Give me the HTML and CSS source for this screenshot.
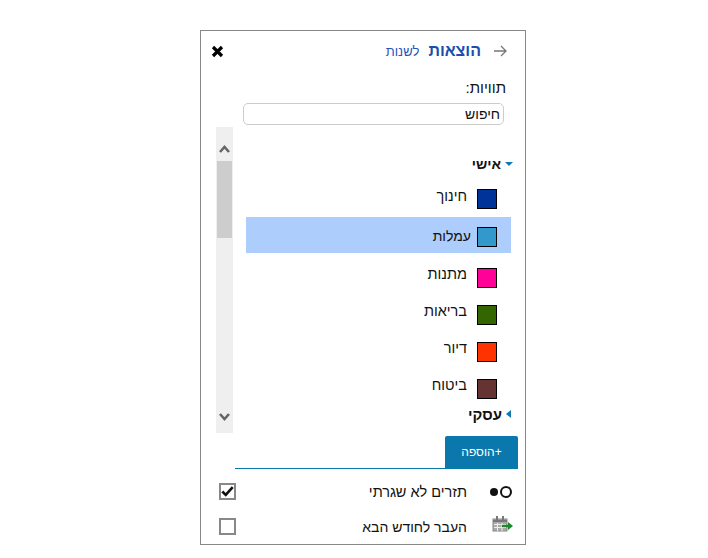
FILE: index.html
```html
<!DOCTYPE html>
<html lang="he" dir="rtl">
<head>
    <meta charset="UTF-8">
    <title>הוצאות</title>
    <link rel="stylesheet" href="styles.css">
</head>
<body>
    <div class="panel">
        <div class="panel__header">
            <svg class="panel__back" width="14" height="12" viewBox="0 0 14 12"><path d="M1 6h12M8 1l5 5-5 5" fill="none" stroke="#777" stroke-width="1.3"/></svg>
            <span class="panel__title">הוצאות</span>
            <a class="panel__change">לשנות</a>
            <svg class="panel__close" width="13" height="13" viewBox="0 0 13 13"><path d="M2 2l9 9M11 2l-9 9" fill="none" stroke="#000" stroke-width="3.2"/></svg>
        </div>

        <div class="panel__label">תוויות:</div>
        <input class="panel__search" type="text" value="חיפוש">

        <div class="tags">
            <div class="tags__list">
                <div class="tags__group tags__group--open"><span class="tags__caret tags__caret--down"></span>אישי</div>
                <div class="tags__item tags__item--first"><span class="tags__swatch" style="background:#003399"></span><span>חינוך</span></div>
                <div class="tags__item tags__item--active"><span class="tags__swatch" style="background:#3399cc"></span><span>עמלות</span></div>
                <div class="tags__item"><span class="tags__swatch" style="background:#ff0099"></span><span>מתנות</span></div>
                <div class="tags__item"><span class="tags__swatch" style="background:#336600"></span><span>בריאות</span></div>
                <div class="tags__item"><span class="tags__swatch" style="background:#ff3300"></span><span>דיור</span></div>
                <div class="tags__item"><span class="tags__swatch" style="background:#663333"></span><span>ביטוח</span></div>
                <div class="tags__group tags__group--closed"><span class="tags__caret tags__caret--left"></span>עסקי</div>
            </div>
            <div class="scrollbar">
                <svg class="scrollbar__arrow" width="11" height="8" viewBox="0 0 11 8"><path d="M1 7l4.500-5 4.500 5" fill="none" stroke="#666" stroke-width="2.6"/></svg>
                <div class="scrollbar__thumb"></div>
                <svg class="scrollbar__arrow scrollbar__arrow--down" width="11" height="8" viewBox="0 0 11 8"><path d="M1 1l4.500 5 4.500-5" fill="none" stroke="#666" stroke-width="2.6"/></svg>
            </div>
        </div>

        <div class="panel__actions">
            <button class="panel__add">+הוספה</button>
        </div>

        <div class="option option--first">
            <svg class="option__icon" width="24" height="14" viewBox="0 0 24 14"><circle cx="5" cy="7" r="4" fill="#111"/><circle cx="17" cy="7" r="5" fill="none" stroke="#111" stroke-width="2"/></svg>
            <span class="option__text">תזרים לא שגרתי</span>
            <span class="option__check">
                <svg width="15" height="13" viewBox="0 0 15 13"><path d="M1.500 6.500l4 4 8-9" fill="none" stroke="#111" stroke-width="3"/></svg>
            </span>
        </div>
        <div class="option">
            <svg class="option__icon option__icon--calendar" width="24" height="18" viewBox="0 0 24 18"><rect x="4" y="3" width="14" height="12" fill="#aaa" stroke="#888"/><path d="M4 5h14" stroke="#777" stroke-width="2"/><path d="M8 0v4M14 0v4" stroke="#777" stroke-width="2"/><path d="M5 8.500h12M5 11.500h12M8.500 7v8M13 7v8" stroke="#eee"/><path d="M13 10h7" stroke="#1d8a2a" stroke-width="2.400"/><path d="M19 6l5 4-5 4z" fill="#1d8a2a"/></svg>
            <span class="option__text">העבר לחודש הבא</span>
            <span class="option__check"></span>
        </div>
    </div>
</body>
</html>
```

FILE: styles.css
```css
html, body {
    margin: 0;
    background: #fff;
}

body {
    padding: 30px 0 0 200px;
    font-family: "Liberation Sans", Arial, sans-serif;
    font-size: 14px;
    color: #111;
    direction: ltr;
}

.panel {
    direction: rtl;
    box-sizing: border-box;
    width: 326px;
    height: 515px;
    border: 1px solid #888;
}

.panel__header {
    display: flex;
    align-items: center;
    height: 40px;
    padding: 0 18px 0 0;
}

.panel__title {
    margin-right: 12px;
    font-size: 16px;
    font-weight: bold;
    color: #1c4eb0;
}

.panel__change {
    margin-right: 9px;
    font-size: 13px;
    color: #2a52be;
}

.panel__close {
    margin-right: auto;
    margin-left: 10px;
}

.panel__label {
    height: 30px;
    margin-top: 2px;
    line-height: 30px;
    padding-right: 19px;
    font-size: 15px;
}

.panel__search {
    display: block;
    box-sizing: border-box;
    width: 261px;
    height: 22px;
    margin: 0 21px 0 0;
    padding: 0 3px;
    border: 1px solid #ccc;
    border-radius: 5px;
    font: 14px "Liberation Sans", Arial, sans-serif;
    color: #111;
    direction: rtl;
}

.tags {
    display: flex;
    height: 306px;
    margin-top: 2px;
    padding-right: 10px;
}

.tags__list {
    width: 269px;
    overflow: hidden;
}

.tags__group {
    display: flex;
    align-items: center;
    font-weight: bold;
}

.tags__group--open {
    height: 20px;
    margin-top: 27px;
}

.tags__group--closed {
    height: 20px;
    margin-top: 3px;
    font-size: 15px;
}

.tags__caret {
    width: 0;
    height: 0;
    margin: 0 2px 0 4px;
}

.tags__caret--down {
    border-left: 4px solid transparent;
    border-right: 4px solid transparent;
    border-top: 4px solid #0a7cb0;
}

.tags__caret--left {
    margin: 0 4px 0 4px;
    border-top: 4px solid transparent;
    border-bottom: 4px solid transparent;
    border-right: 5px solid #0a7cb0;
}

.tags__item {
    display: flex;
    align-items: flex-start;
    height: 37px;
    padding: 15px 18px 0 0;
    box-sizing: border-box;
    font-size: 14.5px;
    line-height: 16px;
}

.tags__item span:last-child {
    margin-right: 10px;
    margin-top: -2px;
}

.tags__item--first {
    height: 28px;
    padding-top: 0;
    margin-top: 15px;
}

.tags__item--first span:last-child {
    margin-top: -1px;
}

.tags__item--active {
    height: 36px;
    margin: 0 4px 0 0;
    padding: 10px 14px 0 0;
    font-size: 14px;
    background: #adcdfd;
}

.tags__item--active span:last-child {
    margin-right: 6px;
    margin-top: 1px;
}

.tags__swatch {
    box-sizing: border-box;
    flex: none;
    width: 20px;
    height: 20px;
    border: 1px solid #000;
}

.scrollbar {
    position: relative;
    display: flex;
    flex-direction: column;
    align-items: center;
    box-sizing: border-box;
    width: 17px;
    margin-right: 13px;
    padding-top: 18px;
    background: #efefef;
}

.scrollbar__thumb {
    width: 15px;
    height: 77px;
    margin-top: 8px;
    background: #cdcdcd;
}

.scrollbar__arrow--down {
    margin-top: auto;
    margin-bottom: 12px;
}

.panel__actions {
    display: flex;
    height: 33px;
    margin: 3px 7px 0 34px;
    border-bottom: 1px solid #0a78a8;
    box-sizing: border-box;
}

.panel__add {
    width: 73px;
    height: 32px;
    padding: 0;
    border: 0;
    border-radius: 2px 2px 0 0;
    background: #0a78ac;
    color: #fff;
    font: 12px "Liberation Sans", Arial, sans-serif;
    direction: rtl;
}

.option {
    display: flex;
    align-items: center;
    height: 35px;
    padding: 0 12px 0 18px;
}

.option--first {
    margin-top: 5px;
    font-size: 14.5px;
}

.option__icon {
    flex: none;
}

.option__icon--calendar {
    margin-top: -3px;
}

.option__text {
    margin-right: 22px;
}

.option__check {
    display: flex;
    align-items: center;
    justify-content: center;
    box-sizing: border-box;
    width: 17px;
    height: 17px;
    margin-right: auto;
    border: 2px solid #888;
    background: #fff;
}
```
